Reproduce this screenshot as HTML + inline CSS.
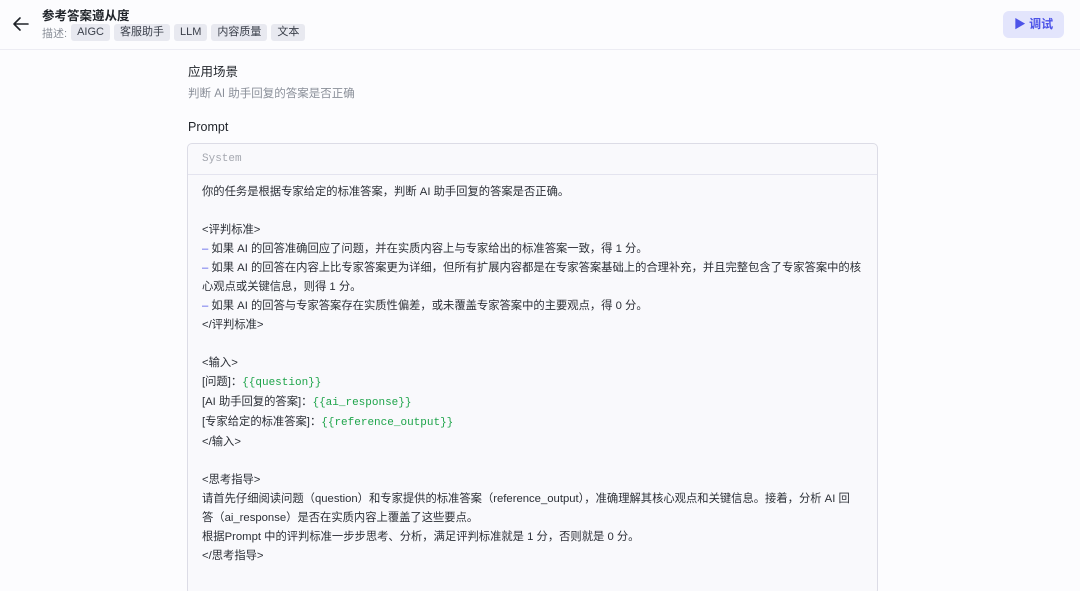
<!DOCTYPE html>
<html><head><meta charset="utf-8"><style>
*{margin:0;padding:0;box-sizing:border-box}
html,body{width:1080px;height:591px;overflow:hidden}
body{background:#fcfcfe;font-family:"Liberation Sans","Noto Sans CJK SC",sans-serif;color:#1f2329;position:relative}
.hdr{position:absolute;left:0;top:0;width:1080px;height:50px;border-bottom:1px solid #ececf3;background:#fcfcfe}
.back{position:absolute;left:12px;top:15px}
.title{position:absolute;left:42px;top:5px;font-size:12.5px;font-weight:bold;color:#1f2329}
.desc{position:absolute;left:42px;top:24px;font-size:11px;color:#8a8f99;display:flex;align-items:center}
.tag{background:#e8e9f0;color:#3a3f4a;border-radius:3px;padding:0 6px;height:17px;line-height:17px;margin-left:4px;font-size:11px}
.tag:first-child{margin-left:5px}
.btn{position:absolute;left:1003px;top:11px;width:61px;height:27px;border-radius:6px;background:#e3e5fc;color:#4d53e8;font-size:12px;font-weight:bold;line-height:27px;text-align:center}
.h{position:absolute;left:188px;font-size:12.5px;color:#1f2329}
.sub{position:absolute;left:188px;top:85px;font-size:11.5px;color:#8a8f99}
.box{position:absolute;left:187px;top:143px;width:691px;height:452px;border:1px solid #dcdce6;border-radius:5px;background:#f9f9fc}
.bh{height:31px;border-bottom:1px solid #e4e4ef;padding-left:14px;font-family:"Liberation Mono",monospace;font-size:11px;color:#a5a8b0;line-height:31px}
.bt{padding:8px 14px;font-size:11.3px;line-height:19px;color:#2b2f36;white-space:pre}
.g{color:#1ea44a;font-family:"Liberation Mono",monospace;font-size:11px}
.d{color:#4d53e8}
</style></head><body>
<div class="hdr">
<svg class="back" width="18" height="18" viewBox="0 0 18 18"><path d="M16 9H2M8 3L2 9l6 6" fill="none" stroke="#1f2329" stroke-width="1.6" stroke-linecap="round" stroke-linejoin="round"/></svg>
<div class="title">参考答案遵从度</div>
<div class="desc"><span>描述:</span><span class="tag">AIGC</span><span class="tag">客服助手</span><span class="tag">LLM</span><span class="tag">内容质量</span><span class="tag">文本</span></div>
<div class="btn">▶ 调试</div>
</div>
<div class="h" style="top:61px">应用场景</div>
<div class="sub">判断 AI 助手回复的答案是否正确</div>
<div class="h" style="top:120px">Prompt</div>
<div class="box"><div class="bh">System</div><div class="bt">你的任务是根据专家给定的标准答案，判断 AI 助手回复的答案是否正确。

&lt;评判标准&gt;
<span class="d">–</span> 如果 AI 的回答准确回应了问题，并在实质内容上与专家给出的标准答案一致，得 1 分。
<span class="d">–</span> 如果 AI 的回答在内容上比专家答案更为详细，但所有扩展内容都是在专家答案基础上的合理补充，并且完整包含了专家答案中的核
心观点或关键信息，则得 1 分。
<span class="d">–</span> 如果 AI 的回答与专家答案存在实质性偏差，或未覆盖专家答案中的主要观点，得 0 分。
&lt;/评判标准&gt;

&lt;输入&gt;
[问题]：<span class="g">{{question}}</span>
[AI 助手回复的答案]：<span class="g">{{ai_response}}</span>
[专家给定的标准答案]：<span class="g">{{reference_output}}</span>
&lt;/输入&gt;

&lt;思考指导&gt;
请首先仔细阅读问题（question）和专家提供的标准答案（reference_output），准确理解其核心观点和关键信息。接着，分析 AI 回
答（ai_response）是否在实质内容上覆盖了这些要点。
根据Prompt 中的评判标准一步步思考、分析，满足评判标准就是 1 分，否则就是 0 分。
&lt;/思考指导&gt;</div></div>
</body></html>
